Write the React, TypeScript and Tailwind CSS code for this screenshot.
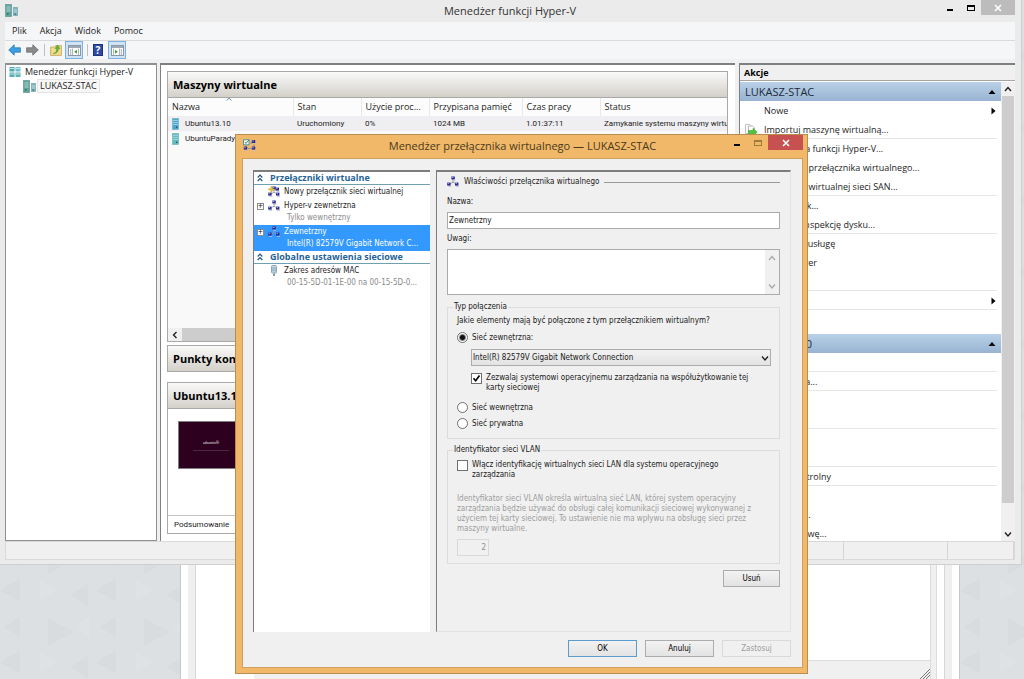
import React from 'react';
import { clsx } from 'clsx';

const uiFont = "font-['Open_Sans','Noto_Sans',sans-serif]";
const listFont = "font-['Roboto','Open_Sans',sans-serif] text-[8px]";
const dialogFont = "font-['DejaVu_Sans_Condensed','DejaVu_Sans',sans-serif]";

/* ---------- icons ---------- */

const ServerIcon = ({ className }: { className?: string }) => (
  <svg viewBox="0 0 13 13" className={clsx('w-[13px] h-[13px] shrink-0', className)}>
    <rect x="0.5" y="0.5" width="6" height="12" fill="#5fa39b" stroke="#6b9c99" strokeWidth="0.8" />
    <path d="M1.5 3h4M1.5 5h4M1.5 7h4" stroke="#bfe6df" strokeWidth="0.8" />
    <rect x="8.5" y="3.5" width="4" height="8" fill="#79b3b5" stroke="#7fa9b5" strokeWidth="0.8" />
    <path d="M9 6h3M9 8h3" stroke="#cfeaf0" strokeWidth="0.8" />
    <rect x="2" y="9" width="1.5" height="1.5" fill="#2f6f4f" />
    <rect x="9.5" y="9.5" width="1.5" height="1" fill="#2f5f7f" />
  </svg>
);

const ManagerIcon = () => (
  <svg viewBox="0 0 12 12" className="w-3 h-3 shrink-0">
    <rect x="0.5" y="1" width="5" height="4.5" fill="#4fa9a9" />
    <rect x="6.5" y="1" width="5" height="4.5" fill="#6cc0c9" />
    <rect x="0.5" y="6.5" width="5" height="4.5" fill="#57aab9" />
    <rect x="6.5" y="6.5" width="5" height="4.5" fill="#5fb3b0" />
    <path d="M1 2.5h4M7 2.5h4M1 8h4M7 8h4" stroke="#d9f2f4" strokeWidth="0.8" />
  </svg>
);

const VmIcon = ({ color }: { color: string }) => (
  <svg viewBox="0 0 7 12" className="w-[7px] h-3 shrink-0">
    <rect x="0.5" y="0.5" width="6" height="11" fill={color} stroke="#6fb0bd" strokeWidth="0.6" />
    <path d="M1 2.5h5M1 4.5h5M1 6.5h5" stroke="#b5e0ea" strokeWidth="0.7" />
    <rect x="4" y="8.5" width="1.5" height="1.5" fill="#2a5d77" />
  </svg>
);

const Monitor = ({ x, y }: { x: number; y: number }) => (
  <g transform={`translate(${x} ${y})`}>
    <rect width="3.4" height="3" fill="#26268c" />
    <rect x="0.5" y="0.5" width="1.5" height="1" fill="#9aa6e8" />
    <path d="M1 3.8h3" stroke="#b9bdd4" strokeWidth="0.9" />
  </g>
);

const NetworkIcon = ({ star = false }: { star?: boolean }) => (
  <svg viewBox="0 0 12 12" className="w-3 h-3 shrink-0">
    <path d="M6 4v3M2.5 8.5L6 6l3.5 2.5" fill="none" stroke="#8d93a8" strokeWidth="0.8" />
    <Monitor x={4.4} y={0.5} />
    <Monitor x={0.2} y={6.6} />
    <Monitor x={8} y={6.6} />
    {star && (
      <g>
        <path d="M3.5 0l1 2.4 2.5.9-2.5 1-1 2.6-1-2.6L0 3.3l2.5-.9z" fill="#e9c22c" stroke="#b8901a" strokeWidth="0.4" />
        <Monitor x={7.6} y={1.6} />
      </g>
    )}
  </svg>
);

const DialogIcon = () => (
  <svg viewBox="0 0 13 12" className="w-[13px] h-3">
    <rect x="0.5" y="0.8" width="5.5" height="5" fill="#fff" stroke="#4f9a9c" />
    <path d="M1.8 3l1.2 1.5L6 0.8" fill="none" stroke="#2f7b7b" strokeWidth="0.9" />
    <path d="M7 4h2M3 6.5v2M5 9.5h3M11 5v3" stroke="#7d86a0" strokeWidth="0.8" />
    <Monitor x={8.8} y={1} />
    <Monitor x={0.8} y={7.6} />
    <Monitor x={8.8} y={7.6} />
  </svg>
);

const AdapterIcon = () => (
  <svg viewBox="0 0 12 12" className="w-3 h-3 shrink-0">
    <rect x="3.5" y="0.5" width="5" height="7.5" rx="1" fill="#c5dbe6" stroke="#7895a6" strokeWidth="0.8" />
    <path d="M5 2v4.5M7 2v4.5" stroke="#6b8ea3" strokeWidth="0.7" />
    <path d="M5 8.5h2v2.5H5z" fill="#8a9aa2" />
  </svg>
);

const ImportIcon = () => (
  <svg viewBox="0 0 14 14" className="w-[14px] h-[14px] shrink-0">
    <path d="M1.5 1.5h4l2 2v7h-6z" fill="#fafafa" stroke="#b3b3b3" strokeWidth="0.8" />
    <path d="M4.5 3h4l2 2v7h-6z" fill="#fff" stroke="#a9a9a9" strokeWidth="0.8" />
    <path d="M4.5 7.5H9V5.2l4.2 4-4.2 4v-2.4H4.5z" fill="#4fc63a" stroke="#2f8f22" strokeWidth="0.5" />
  </svg>
);

const ArrowIcon = ({ back = false }: { back?: boolean }) => (
  <svg viewBox="0 0 13 12" className="w-[13px] h-3">
    {back ? (
      <path d="M0.7 6L6.2 0.8v3h6.2v4.4H6.2v3z" fill="#3d9fe0" stroke="#2a7cb8" strokeWidth="0.8" />
    ) : (
      <path d="M12.3 6L6.8 0.8v3H0.6v4.4h6.2v3z" fill="#8a8a8a" stroke="#6f6f6f" strokeWidth="0.8" />
    )}
  </svg>
);

const FolderUpIcon = () => (
  <svg viewBox="0 0 12 12" className="w-3 h-3">
    <path d="M0.6 3h4l1-1.4h5.8v9.8H0.6z" fill="#f2dc8c" stroke="#b99b45" strokeWidth="0.7" />
    <path d="M3 9.5c3 0 3.6-2.5 3.6-5H5L7.5 1 10 4.5H8.4C8.4 8 6.5 9.7 3 9.5z" fill="#5fb53c" stroke="#3c8526" strokeWidth="0.4" />
  </svg>
);

const PaneIcon = ({ flip = false }: { flip?: boolean }) => (
  <svg viewBox="0 0 13 11" className={clsx('w-[13px] h-[11px]', flip && '-scale-x-100')}>
    <rect x="0.5" y="0.5" width="12" height="10" fill="#fff" stroke="#8b98a5" />
    <path d="M1 2h11" stroke="#9fa9b3" strokeWidth="2" />
    <path d="M4.5 3.5V10M10.5 3.5V10" stroke="#9aa4ad" strokeWidth="0.8" />
    <path d="M2 5h1.3M2 7h1.3M2 9h1.3" stroke="#536475" strokeWidth="0.8" />
    <path d="M9 4.8v4L6 6.8z" fill="#45a23a" />
  </svg>
);

const HelpIcon = () => (
  <span className="flex w-[10px] h-3 items-center justify-center bg-[#2d4ba6] border border-[#1f3477] text-white text-[10px] leading-none font-bold">
    ?
  </span>
);

const Chevron = ({ dir, className }: { dir: 'up' | 'down' | 'left'; className?: string }) => {
  const paths = { up: 'M1 6l3-3.5L7 6', down: 'M1 2.5L4 6l3-3.5', left: 'M5.5 1L2.5 4l3 3' };
  return (
    <svg viewBox="0 0 8 8" className={clsx('w-2 h-2', className)}>
      <path d={paths[dir]} fill="none" stroke="currentColor" strokeWidth="1.3" />
    </svg>
  );
};

const DoubleChevron = () => (
  <svg viewBox="0 0 6 8" className="w-[6px] h-2">
    <path d="M0.7 3.5L3 1.2l2.3 2.3M0.7 7L3 4.7 5.3 7" fill="none" stroke="#1b4f86" strokeWidth="1.2" />
  </svg>
);

const Triangle = ({ dir }: { dir: 'up' | 'right' }) => (
  <svg viewBox="0 0 8 8" className="w-2 h-2">
    <path d={dir === 'up' ? 'M0.5 6L4 2l3.5 4z' : 'M2.5 0.5L6.5 4l-4 3.5z'} fill="#000" />
  </svg>
);

const CloseX = () => (
  <svg viewBox="0 0 8 8" className="w-2 h-2">
    <path d="M1 1l6 6M7 1L1 7" stroke="#fff" strokeWidth="1.6" />
  </svg>
);

/* ---------- desktop and the window at the back ---------- */

const Backdrop = () => (
  <div className="absolute inset-0 bg-[#dce0e3] overflow-hidden">
    <svg className="absolute inset-0 w-full h-full" aria-hidden="true">
      <defs>
        <pattern id="tri" width="96" height="72" patternUnits="userSpaceOnUse">
          <path d="M0 14l20-12v24zM48 42l26 14-26 14zM88 8v22L70 19zM20 40v22L4 51z" fill="#d8dcdf" />
          <path d="M40 4l18 10-18 10zM90 40v22l-14-11z" fill="#dee2e4" />
        </pattern>
      </defs>
      <rect width="100%" height="100%" fill="url(#tri)" />
    </svg>
    <div className="absolute inset-y-0 left-[180px] right-[64px] flex bg-white border-x border-[#c6c9cb]">
      <div className="w-[7px]" />
      <div className="w-2 bg-[#efefef] border-r border-[#d8d8d8]" />
      <div className="flex-1 flex flex-col">
        <div className="flex-1" />
        <div className="h-[19px] ml-[58px] flex items-end justify-end bg-[#f0f0f0] border-t border-[#dcdcdc]">
          <svg viewBox="0 0 10 10" className="w-[10px] h-[10px]">
            <path d="M0 10L10 0M3 10l7-7M6 10l4-4" stroke="#777" strokeWidth="1" />
          </svg>
        </div>
      </div>
      <div className="w-[7px] bg-[#f0f0f0] border-x border-[#dcdcdc]" />
      <div className="w-[7px]" />
      <div className="w-2 bg-[#efefef] border-l border-[#d8d8d8]" />
      <div className="w-[7px]" />
    </div>
  </div>
);

/* ---------- Hyper-V manager ---------- */

const columns = [
  { name: 'Nazwa', width: 'w-[125px]' },
  { name: 'Stan', width: 'w-[68px]' },
  { name: 'Użycie proc...', width: 'w-[68px]' },
  { name: 'Przypisana pamięć', width: 'w-[93px]' },
  { name: 'Czas pracy', width: 'w-[78px]' },
  { name: 'Status', width: 'w-auto' },
];

const machines = [
  { color: '#4aa5cf', cells: ['Ubuntu13.10', 'Uruchomiony', '0%', '1024 MB', '1.01:37:11', 'Zamykanie systemu maszyny wirtu'] },
  { color: '#5fbcb8', cells: ['UbuntuParadyz', 'Wyłączony', '', '', '', ''] },
];

interface Action {
  label: string;
  icon?: React.ReactNode;
  sub?: boolean;
}

const hostActions: Action[][] = [
  [{ label: 'Nowe', sub: true }, { label: 'Importuj maszynę wirtualną...', icon: <ImportIcon /> }],
  [{ label: 'Ustawienia funkcji Hyper-V...' }, { label: 'Menedżer przełącznika wirtualnego...' }, { label: 'Menedżer wirtualnej sieci SAN...' }],
  [{ label: 'Edytuj dysk...' }, { label: 'Wykonaj inspekcję dysku...' }],
  [{ label: 'Zatrzymaj usługę' }, { label: 'Usuń serwer' }, { label: 'Odśwież' }],
  [{ label: 'Widok', sub: true }],
];

const machineActions: Action[][] = [
  [{ label: 'Połącz...' }],
  [{ label: 'Ustawienia...' }],
  [{ label: 'Wyłącz...' }, { label: 'Zamknij...' }],
  [{ label: 'Zapisz' }, { label: 'Resetuj' }],
  [{ label: 'Punkt kontrolny' }],
  [{ label: 'Przenieś...' }, { label: 'Eksportuj...' }, { label: 'Zmień nazwę...' }],
];

const BoxHeader = ({ children }: { children: React.ReactNode }) => (
  <h2 className="h-[27px] px-[5px] flex items-center shrink-0 border border-[#a9a9a9] bg-linear-to-b from-[#fafafa] to-[#d3d0c9] text-[11px] font-bold text-black whitespace-nowrap">
    {children}
  </h2>
);

const ActionHeader = ({ children }: { children: React.ReactNode }) => (
  <div className="h-[19px] px-[5px] flex items-center justify-between bg-linear-to-b from-[#b9d1e8] to-[#98b4d2] text-[11px] text-[#1e2b3a]">
    <span>{children}</span>
    <Triangle dir="up" />
  </div>
);

const ActionGroups = ({ groups }: { groups: Action[][] }) => (
  <>
    {groups.map((group) => (
      <ul key={group[0].label} className="relative after:absolute after:bottom-0 after:left-6 after:right-1 after:h-px after:bg-[#e6e6e6]">
        {group.map(({ label, icon, sub }) => (
          <li key={label}>
            <button className="w-full h-[19px] px-1 flex items-center text-left whitespace-nowrap">
              <span className="w-5 shrink-0">{icon}</span>
              <span className="flex-1">{label}</span>
              {sub && <Triangle dir="right" />}
            </button>
          </li>
        ))}
      </ul>
    ))}
  </>
);

const ManagerWindow = () => (
  <div className={clsx('absolute left-0 right-[2px] top-0 bottom-[114px] pl-[5px] pr-[6px] pb-1 flex flex-col bg-[#ebebeb] border-r border-b border-[#cdcfd0] text-[9px] leading-[14px] text-[#1c1c1c]', uiFont)}>
    <header className="h-[22px] flex items-start shrink-0">
      <div className="w-20 pt-1"><ServerIcon /></div>
      <h1 className="flex-1 pt-[3px] text-center text-[11px] leading-4 text-[#333]">Menedżer funkcji Hyper-V</h1>
      <div className="w-20 flex justify-end items-start">
        <button aria-label="Minimalizuj" className="w-[22px] h-[14px] flex items-end justify-center pb-[3px]"><span className="w-[6px] h-[2px] bg-black" /></button>
        <button aria-label="Maksymalizuj" className="w-5 h-[15px] flex items-center justify-center"><span className="w-2 h-[6px] border border-t-2 border-black" /></button>
        <button aria-label="Zamknij" className="w-[34px] h-[15px] flex items-center justify-center bg-[#bcbcbc]"><CloseX /></button>
      </div>
    </header>

    <nav className="h-[19px] px-[7px] flex items-center gap-[13px] shrink-0 bg-[#f5f6f7] border-b border-[#d8dadb]">
      {['Plik', 'Akcja', 'Widok', 'Pomoc'].map((item) => (
        <button key={item}>{item}</button>
      ))}
    </nav>

    <div className="h-[18px] pl-[3px] flex items-center shrink-0 bg-[#f5f6f7]">
      <button aria-label="Wstecz" className="mr-[5px]"><ArrowIcon back /></button>
      <button aria-label="Dalej"><ArrowIcon /></button>
      <span className="w-px h-3 mx-[5px] bg-[#bfbfbf]" />
      <button aria-label="W górę" className="mr-[3px]"><FolderUpIcon /></button>
      <button aria-label="Drzewo konsoli" className="w-[18px] h-[18px] flex items-center justify-center bg-[#cfe3f7] border border-[#7fb1e0]"><PaneIcon /></button>
      <span className="w-px h-3 mx-1 bg-[#bfbfbf]" />
      <button aria-label="Pomoc" className="ml-px mr-[5px]"><HelpIcon /></button>
      <button aria-label="Okienko akcji" className="w-[18px] h-[18px] flex items-center justify-center bg-[#cfe3f7] border border-[#7fb1e0]"><PaneIcon flip /></button>
    </div>

    <main className="flex-1 min-h-0 pt-1 flex bg-[#f0f0f0]">
      <aside className="w-[152px] shrink-0 bg-white border-t-2 border-x border-b border-[#8e9194]">
        <div className="h-[14px] pl-[3px] flex items-center gap-1">
          <ManagerIcon />
          <span>Menedżer funkcji Hyper-V</span>
        </div>
        <div className="h-[14px] pl-[17px] flex items-center gap-px">
          <ServerIcon />
          <span className="px-[2px] bg-[#f7f7f7] border border-[#e3e3e3] leading-3">LUKASZ-STAC</span>
        </div>
      </aside>

      <section className="flex-1 min-w-0 ml-[3px] pt-[6px] pl-[6px] pr-[7px] flex flex-col bg-white border-t-2 border-l border-[#7d8083]">
        <BoxHeader>Maszyny wirtualne</BoxHeader>
        <div className="h-[244px] shrink-0 flex flex-col border-x border-b border-[#a9a9a9] bg-[#f9f9f9] overflow-hidden">
          <table className="w-full table-fixed border-collapse">
            <thead className="bg-[#fcfcfc]">
              <tr className="h-[18px]">
                {columns.map(({ name, width }, i) => (
                  <th key={name} className={clsx('relative pl-1 text-left font-normal whitespace-nowrap border-r border-[#e8e8e8] last:border-r-0', width)}>
                    {name}
                    {i === 0 && <Chevron dir="up" className="absolute -top-[3px] left-[58px] w-[6px] text-[#5f8fa8]" />}
                  </th>
                ))}
              </tr>
            </thead>
            <tbody className={listFont}>
              {machines.map(({ color, cells }, row) => (
                <tr key={cells[0]} className={clsx('h-[15px]', row === 0 && 'bg-[#efeff1]')}>
                  {cells.map((cell, i) => (
                    <td key={i} className="pl-1 whitespace-nowrap">
                      {i === 0 ? (
                        <span className="flex items-center gap-[6px]"><VmIcon color={color} />{cell}</span>
                      ) : cell}
                    </td>
                  ))}
                </tr>
              ))}
            </tbody>
          </table>
          <div className="mt-auto h-[13px] flex bg-[#f0f0f0]">
            <button aria-label="Przewiń w lewo" className="w-[14px] flex items-center justify-center"><Chevron dir="left" /></button>
            <div className="w-[400px] bg-[#cdcdcd]" />
          </div>
        </div>
        <div className="mt-[3px]"><BoxHeader>Punkty kontrolne</BoxHeader></div>
        <div className="mt-[10px]"><BoxHeader>Ubuntu13.10</BoxHeader></div>
        <div className="flex-1 mb-[7px] flex flex-col border-x border-b border-[#a9a9a9]">
          <div className="flex-1 pt-3 pl-[10px]">
            <div className="w-[86px] h-[48px] flex flex-col items-center justify-center gap-1 bg-[#2c001e] border border-[#7f7f7f]">
              <span className="text-[4px] leading-[6px] italic text-white -ml-5">ubuntu®</span>
              <span className="w-9 h-px -ml-5 bg-[#4d2941]" />
            </div>
          </div>
          <div className={clsx('h-[18px] pl-[6px] flex items-center border-t border-[#c4c4c4]', listFont)}>Podsumowanie</div>
        </div>
      </section>

      <section className="w-[276px] shrink-0 ml-1 flex flex-col bg-white border-t-2 border-l border-[#7d8083]">
        <h2 className="h-4 pl-1 flex items-center shrink-0 bg-[#f0f0f0] border-b border-[#a5a5a5] font-bold text-black">Akcje</h2>
        <div className="flex-1 min-h-0 pt-px flex">
          <div className="flex-1 overflow-hidden">
            <ActionHeader>LUKASZ-STAC</ActionHeader>
            <ActionGroups groups={hostActions} />
            <div className="h-6" />
            <ActionHeader>Ubuntu13.10</ActionHeader>
            <ActionGroups groups={machineActions} />
          </div>
          <div className="w-[14px] flex flex-col bg-[#f0f0f0]">
            <button aria-label="Przewiń w górę" className="h-[14px] flex items-center justify-center"><Chevron dir="up" /></button>
            <div className="flex-1 mx-px bg-[#cdcdcd]" />
            <div className="h-6" />
            <button aria-label="Przewiń w dół" className="h-[14px] flex items-center justify-center"><Chevron dir="down" /></button>
          </div>
        </div>
      </section>
    </main>

    <footer className="h-[19px] shrink-0 flex bg-[#f0f0f0] border border-[#d9d9d9]">
      <div className="flex-1 border-r border-[#d5d5d5]" />
      <div className="w-[104px] border-r border-[#d5d5d5]" />
      <div className="w-[66px] border-r border-[#d5d5d5]" />
    </footer>
  </div>
);

/* ---------- virtual switch dialog ---------- */

const TreeHeading = ({ children }: { children: React.ReactNode }) => (
  <h3 className={clsx('h-[13px] pl-[3px] flex items-center gap-[7px] border-b border-[#6f9fb0] text-[9px] font-bold text-[#1f6399] whitespace-nowrap', uiFont)}>
    <DoubleChevron />
    {children}
  </h3>
);

interface TreeItemProps {
  icon: React.ReactNode;
  label: string;
  detail?: string;
  expandable?: boolean;
  selected?: boolean;
}

const TreeItem = ({ icon, label, detail, expandable, selected }: TreeItemProps) => (
  <div className={clsx('pl-[3px]', selected && 'bg-[#3399ff] text-white')}>
    <div className="h-[14px] flex items-center">
      <span className="w-[11px]">
        {expandable && (
          <span className="w-[7px] h-[7px] flex items-center justify-center bg-white border border-[#8c8c8c] text-[7px] leading-none text-black">+</span>
        )}
      </span>
      {icon}
      <span className="ml-1 whitespace-nowrap">{label}</span>
    </div>
    {detail && (
      <div className={clsx('h-3 pl-[30px] leading-[10px] whitespace-nowrap', !selected && 'text-[#8a8a8a]')}>{detail}</div>
    )}
  </div>
);

const Radio = ({ label, checked }: { label: string; checked?: boolean }) => (
  <label className="flex items-center gap-1">
    <input
      type="radio"
      name="connection"
      defaultChecked={checked}
      className="appearance-none w-[11px] h-[11px] rounded-full border border-[#707070] bg-white checked:bg-[radial-gradient(circle,#111_0_2px,#fff_4px)]"
    />
    {label}
  </label>
);

const Checkbox = ({ checked, children }: { checked?: boolean; children: React.ReactNode }) => (
  <label className="flex items-start gap-1">
    <span className="grid shrink-0">
      <input type="checkbox" defaultChecked={checked} className="peer [grid-area:1/1] appearance-none w-[11px] h-[11px] border border-[#707070] bg-white" />
      <svg viewBox="0 0 11 11" className="[grid-area:1/1] w-[11px] h-[11px] pointer-events-none invisible peer-checked:visible">
        <path d="M2.5 5.2l2.2 2.6L8.5 2.5" fill="none" stroke="#000" strokeWidth="1.6" />
      </svg>
    </span>
    <span>{children}</span>
  </label>
);

const buttonBase = 'h-[17px] border text-center';
const buttonIdle = 'border-[#acacac] bg-linear-to-b from-[#f2f2f2] to-[#e3e3e3] text-black';

const SwitchDialog = () => (
  <div className={clsx('absolute left-[235px] right-[216px] top-[134px] bottom-[5px] pl-[6px] pr-1 pb-[5px] flex flex-col bg-[#f0b868] border border-[#b98d50] text-[8px] leading-[10px] text-[#1a1a1a]', dialogFont)}>
    <header className="h-[23px] shrink-0 flex items-start">
      <div className="w-[82px] pt-1 pl-[1px]"><DialogIcon /></div>
      <h2 className={clsx('flex-1 pt-[3px] text-center text-[11px] leading-4 text-[#4a3a20] whitespace-nowrap', uiFont)}>Menedżer przełącznika wirtualnego — LUKASZ-STAC</h2>
      <div className="w-[82px] flex justify-end items-start">
        <button aria-label="Minimalizuj" className="w-[22px] h-[14px] flex items-end justify-center pb-[3px]"><span className="w-[6px] h-[2px] bg-black" /></button>
        <button aria-label="Maksymalizuj" className="w-5 h-[15px] flex items-center justify-center"><span className="w-2 h-[6px] border border-t-2 border-[#a07c3c]" /></button>
        <button aria-label="Zamknij" className="w-[35px] h-[15px] flex items-center justify-center bg-[#c75050]"><CloseX /></button>
      </div>
    </header>

    <form className="flex-1 min-h-0 pt-[11px] pl-[10px] pr-[11px] pb-[10px] flex flex-col bg-[#f0f0f0] border border-[#cfa15c]">
      <div className="flex-1 min-h-0 flex gap-[6px]">
        <div className="w-[177px] shrink-0 bg-white border-t-2 border-l border-[#7d7d7d] overflow-hidden">
          <TreeHeading>Przełączniki wirtualne</TreeHeading>
          <TreeItem icon={<NetworkIcon star />} label="Nowy przełącznik sieci wirtualnej" />
          <TreeItem icon={<NetworkIcon />} label="Hyper-v zewnetrzna" detail="Tylko wewnętrzny" expandable />
          <TreeItem icon={<NetworkIcon />} label="Zewnetrzny" detail="Intel(R) 82579V Gigabit Network C..." expandable selected />
          <TreeHeading>Globalne ustawienia sieciowe</TreeHeading>
          <TreeItem icon={<AdapterIcon />} label="Zakres adresów MAC" detail="00-15-5D-01-1E-00 na 00-15-5D-0..." />
        </div>

        <div className="flex-1 min-w-0 px-[10px] flex flex-col border-t-2 border-x border-b border-t-[#7d7d7d] border-l-[#7d7d7d] border-r-[#e3e3e3] border-b-[#e3e3e3]">
          <div className="h-5 flex items-center gap-[5px]">
            <NetworkIcon />
            <span>Właściwości przełącznika wirtualnego</span>
            <span className="flex-1 h-px bg-[#9b9b9b]" />
          </div>
          <label htmlFor="name" className="h-5 flex items-center">Nazwa:</label>
          <input id="name" defaultValue="Zewnetrzny" className="h-[17px] px-px border border-[#ababab] bg-white" />
          <label htmlFor="notes" className="h-5 flex items-center">Uwagi:</label>
          <div className="h-[46px] flex border border-[#ababab] bg-white">
            <textarea id="notes" className="flex-1 p-[2px] resize-none overflow-hidden" />
            <div className="w-[14px] py-1 flex flex-col items-center justify-between bg-[#f0f0f0] text-[#a8a8a8]">
              <Chevron dir="up" />
              <Chevron dir="down" />
            </div>
          </div>

          <fieldset className="mt-[7px] pt-1 px-[9px] pb-[9px] border border-[#dcdcdc]">
            <legend className="-ml-1 px-[1px]">Typ połączenia</legend>
            <p>Jakie elementy mają być połączone z tym przełącznikiem wirtualnym?</p>
            <div className="mt-[6px]"><Radio label="Sieć zewnętrzna:" checked /></div>
            <div className="mt-[6px] ml-[14px] mr-[-1px] grid items-center">
              <select aria-label="Karta sieciowa" className="[grid-area:1/1] appearance-none h-[17px] px-px border border-[#acacac] bg-linear-to-b from-[#f2f2f2] to-[#e3e3e3]">
                <option>Intel(R) 82579V Gigabit Network Connection</option>
              </select>
              <Chevron dir="down" className="[grid-area:1/1] justify-self-end mr-[2px] pointer-events-none" />
            </div>
            <div className="mt-[7px] ml-[14px]">
              <Checkbox checked>
                Zezwalaj systemowi operacyjnemu zarządzania na współużytkowanie tej
                <br />
                karty sieciowej
              </Checkbox>
            </div>
            <div className="mt-[9px] flex flex-col gap-[5px]">
              <Radio label="Sieć wewnętrzna" />
              <Radio label="Sieć prywatna" />
            </div>
          </fieldset>

          <fieldset className="mt-[6px] pt-[5px] px-[9px] pb-[7px] border border-[#dcdcdc]">
            <legend className="-ml-1 px-[1px]">Identyfikator sieci VLAN</legend>
            <Checkbox>
              Włącz identyfikację wirtualnych sieci LAN dla systemu operacyjnego
              <br />
              zarządzania
            </Checkbox>
            <p className="mt-[14px] text-[#9d9d9d]">
              Identyfikator sieci VLAN określa wirtualną sieć LAN, której system operacyjny
              <br />
              zarządzania będzie używać do obsługi całej komunikacji sieciowej wykonywanej z
              <br />
              użyciem tej karty sieciowej. To ustawienie nie ma wpływu na obsługę sieci przez
              <br />
              maszyny wirtualne.
            </p>
            <input aria-label="Identyfikator sieci VLAN" defaultValue="2" disabled className="block mt-[5px] w-8 h-[17px] px-[2px] text-right border border-[#d9d9d9] text-[#8d8d8d]" />
          </fieldset>

          <button type="button" className={clsx(buttonBase, buttonIdle, 'mt-[6px] w-[57px] self-end')}>Usuń</button>
        </div>
      </div>

      <div className="mt-2 flex justify-end gap-2 shrink-0">
        <button type="button" className={clsx(buttonBase, 'w-[69px] border-[#5a9bd0] bg-linear-to-b from-[#f2f2f2] to-[#e3e3e3] text-black')}>OK</button>
        <button type="button" className={clsx(buttonBase, buttonIdle, 'w-[69px]')}>Anuluj</button>
        <button type="button" disabled className={clsx(buttonBase, 'w-[69px] border-[#d9d9d9] text-[#9d9d9d]')}>Zastosuj</button>
      </div>
    </form>
  </div>
);

export default function App() {
  return (
    <div className="relative h-screen overflow-hidden">
      <Backdrop />
      <ManagerWindow />
      <SwitchDialog />
    </div>
  );
}
